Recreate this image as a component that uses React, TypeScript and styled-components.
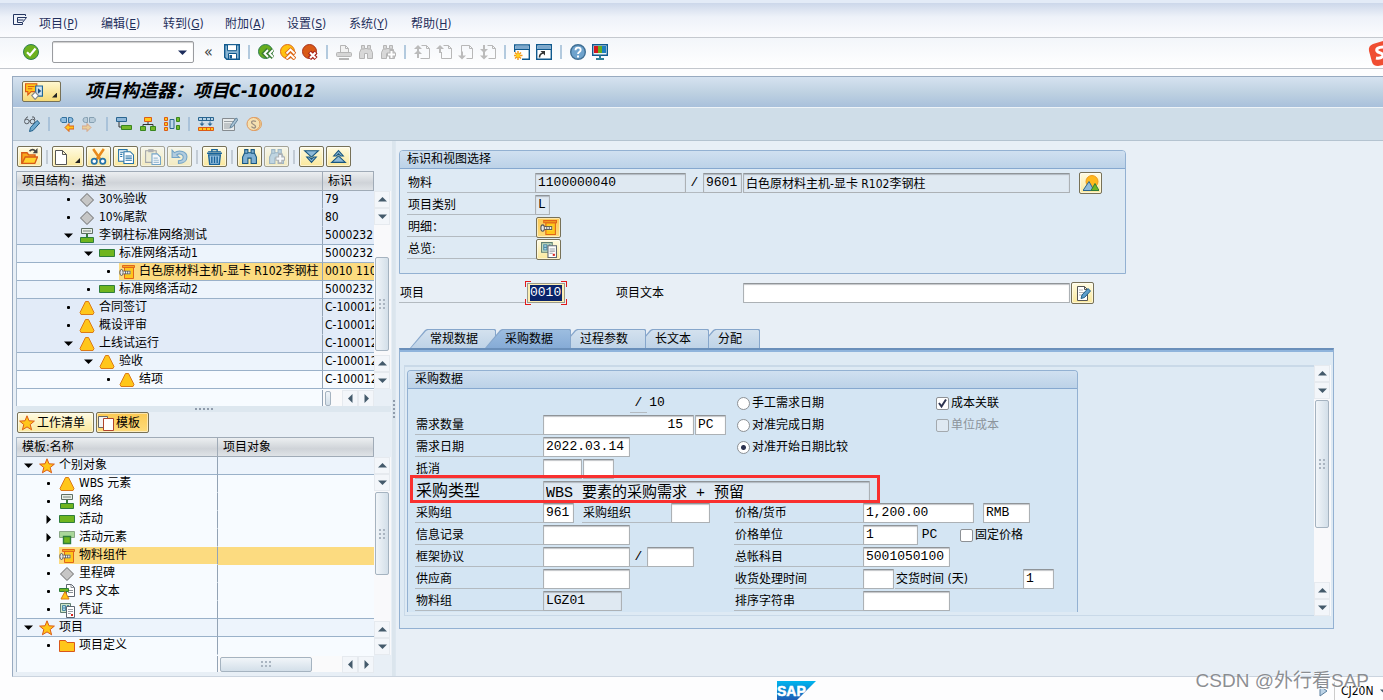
import React from "react";
import styled, { createGlobalStyle, css } from "styled-components";

const UI = `"DejaVu Sans Condensed", "Noto Sans", "Noto Sans CJK SC", sans-serif`;
const MONO = `"Liberation Mono", "Noto Sans CJK SC", monospace`;

const GlobalStyle = createGlobalStyle`
  *, *::before, *::after { box-sizing: border-box; }
  body {
    margin: 0;
    background: #fff;
    color: #000;
    font: 12px/18px ${UI};
  }
  button, input { font: inherit; color: inherit; margin: 0; }
`;

/* ---------- icons ---------- */

const binocular = (fill: string, stroke: string) => (
  <path
    d="M3.5 1.5h3v3h3v-3h3v3l2 4v6h-5v-5h-3v5h-5v-6l2-4z M3.5 5h3 M9.5 5h3"
    fill={fill}
    stroke={stroke}
  />
);

const ICONS: Record<string, React.ReactNode> = {
  menu: <path d="M13.5 3V1.5h-12v10h9V10 M5.5 4.5h9l-4 5h-5z M5.5 7h6" fill="none" stroke="#233560" />,
  ok: (
    <>
      <circle cx="8" cy="8" r="7.5" fill="#6db11e" stroke="#2f7f55" />
      <path d="M4 8.2l3 3 5.500-6.700" fill="none" stroke="#fff" strokeWidth="2.2" />
    </>
  ),
  save: (
    <>
      <path d="M.7.7h14.6v14.6H2.700l-2-2z" fill="#89b5d3" stroke="#10598e" strokeWidth="1.4" />
      <path d="M3.5.7h9v6h-9z" fill="#fff" stroke="#10598e" />
      <path d="M4.5 9.5h8V15h-8z" fill="#fff" stroke="#10598e" />
      <path d="M5.5 11H8v3.500H5.500z" fill="#10598e" />
    </>
  ),
  back: (
    <>
      <circle cx="7.500" cy="7.500" r="7" fill="#67ad1d" stroke="#2f7f55" />
      <path d="M10 5.500l-4 4 4 4 M15 5.500l-4 4 4 4" fill="none" stroke="#3b7d35" strokeWidth="4" />
      <path d="M10 6L6.500 9.500 10 13 M15 6l-3.500 3.500L15 13" fill="none" stroke="#fff" strokeWidth="1.8" />
    </>
  ),
  exit: (
    <>
      <circle cx="7.500" cy="7.500" r="7" fill="#ffc20e" stroke="#dd6a1b" />
      <path d="M6 10l4.500-4 4.500 4 M6 15l4.500-4 4.500 4" fill="none" stroke="#dd6a1b" strokeWidth="4" />
      <path d="M6.500 9.500l4-4 4 4 M6.500 14.500l4-4 4 4" fill="none" stroke="#fff" strokeWidth="1.8" />
    </>
  ),
  cancel: (
    <>
      <circle cx="7.500" cy="7.500" r="7" fill="#d95a16" stroke="#a8321c" />
      <path d="M7.500 8l6.500 6.500 M14 8l-6.500 6.500" stroke="#a8231a" strokeWidth="4.5" />
      <path d="M8 8.500l5.500 5.500 M13.500 8.500L8 14" stroke="#fff" strokeWidth="2" />
    </>
  ),
  print: (
    <>
      <path d="M4.500 8V1.500h5l3 3V8 M9.500 1.500v3h3" fill="#f2f2f2" stroke="#b5b5b5" />
      <rect x=".5" y="8.5" width="15" height="4" rx="1" fill="#d5d5d5" stroke="#b5b5b5" />
      <path d="M3 15h10" stroke="#b5b5b5" strokeWidth="2" />
    </>
  ),
  find: binocular("#d8d8d8", "#b5b5b5"),
  findNext: (
    <>
      {binocular("#d8d8d8", "#b5b5b5")}
      <path d="M11.500 5v10 M7 10.500h9" stroke="#b5b5b5" strokeWidth="4" />
      <path d="M11.500 7v7 M8 10.500h7" stroke="#fff" strokeWidth="2" />
    </>
  ),
  first: (
    <>
      <path d="M7.500 1.500h5l3 3v10h-9 M12.500 1.500v3h3" fill="none" stroke="#b8b8b8" />
      <path d="M4 1L0 5h3v3h2V5h3z M4 6L0 10h3v4h2v-4h3z" fill="#bbb" />
    </>
  ),
  prev: (
    <>
      <path d="M7.500 1.500h5l3 3v10h-10V8 M12.500 1.500v3h3" fill="none" stroke="#b8b8b8" />
      <path d="M4 1L0 5h3v4h2V5h3z" fill="#bbb" />
    </>
  ),
  next: (
    <>
      <path d="M3.500 9V1.500h8l3 3v10h-6 M11.500 1.500v3h3" fill="none" stroke="#b8b8b8" />
      <path d="M4 15.500l-4-4h3v-4h2v4h3z" fill="#bbb" />
    </>
  ),
  last: (
    <>
      <path d="M7.500 1.500h5l3 3v10h-7 M12.500 1.500v3h3" fill="none" stroke="#b8b8b8" />
      <path d="M4 9L0 5h3V1h2v4h3z M4 15.500l-4-4h3V8h2v3.500h3z" fill="#bbb" />
    </>
  ),
  newSession: (
    <>
      <path d="M.7 8V1h14.600v14.300H8" fill="#fff" stroke="#10598e" strokeWidth="1.4" />
      <path d="M1.500 1.500h13V5h-13z" fill="#7da8cc" />
      <path d="M0 5.500h16" stroke="#10598e" />
      <path d="M4 7v9 M0 11.500h8.500 M1 8.500l6 6 M7 8.500l-6 6" stroke="#f59a1b" strokeWidth="1.5" />
      <circle cx="4" cy="11.5" r="2" fill="#ffd21e" />
    </>
  ),
  shortcut: (
    <>
      <path d="M.7.7h14.600v14.600H.7z" fill="#fff" stroke="#10598e" strokeWidth="1.4" />
      <path d="M1.500 1.500h13V5h-13z" fill="#7da8cc" />
      <path d="M1 5.500h14" stroke="#10598e" />
      <path d="M3.500 13.500c0-3 1-4 3.500-4.500" fill="none" stroke="#333" strokeWidth="1.6" />
      <path d="M4.500 7h4.500v4.500z" fill="#333" />
    </>
  ),
  help: (
    <>
      <circle cx="8" cy="8" r="7.3" fill="#6fa3cd" stroke="#3f6f95" strokeWidth="1.4" />
      <path d="M5.500 6.200C5.500 2.800 10.700 3 10.700 6c0 2-2.700 2-2.700 4" fill="none" stroke="#fff" strokeWidth="1.8" />
      <path d="M7 11.500h2v2H7z" fill="#fff" />
    </>
  ),
  monitor: (
    <>
      <path d="M.7.7h14.600v10.600H.7z" fill="#e9f1f6" stroke="#10598e" strokeWidth="1.4" />
      <path d="M2 2h4v7H2z" fill="#d6171b" />
      <path d="M6 2h4v7H6z" fill="#67ad1d" />
      <path d="M10 2h4v7h-4z" fill="#1d7fbe" />
      <path d="M8 11.500v3 M4 15h8" stroke="#2f7f98" strokeWidth="2" />
    </>
  ),
  glasses: (
    <>
      <circle cx="2.800" cy="5.500" r="2.300" fill="none" stroke="#5b6066" />
      <circle cx="8.500" cy="5.500" r="2.300" fill="none" stroke="#5b6066" />
      <path d="M.8 4L3 1h1 M8 1h2l1 3 M5 5h1.500" fill="none" stroke="#5b6066" />
      <path d="M5.500 15.500l1-4L13 4.500 15.700 7 9 14.500z" fill="#6fa9cf" stroke="#215f88" />
    </>
  ),
  swapLeft: (
    <>
      <path d="M8.500 1.500H4a3 3 0 000 5h4.500z M10.500 1.500h2a2.500 2.500 0 010 5h-2z" fill="#8fbde0" stroke="#34719d" />
      <path d="M7 11.500l4-4V10h5v3h-5v2.500z" fill="#ffc61a" stroke="#dc5a16" />
    </>
  ),
  swapRight: (
    <g opacity=".6">
      <path d="M7.500 1.500H12a3 3 0 010 5H7.500z M5.500 1.500h-2a2.500 2.500 0 000 5h2z" fill="#a9c1d1" stroke="#56788f" />
      <path d="M9 11.500l-4-4V10H0v3h5v2.500z" fill="#fcc66a" stroke="#d8804a" />
    </g>
  ),
  gantt: (
    <>
      <path d="M3 6v5h3" fill="none" stroke="#333" />
      <path d="M.5 1.500h10v4H.5z" fill="#8db6d8" stroke="#2a6590" />
      <path d="M5.500 9.500h10v4h-10z" fill="#76b82a" stroke="#38861f" />
    </>
  ),
  hierarchy: (
    <>
      <path d="M8 6v3 M3 11V8.500h10V11" fill="none" stroke="#333" />
      <path d="M4.500 1.500h7v4h-7z" fill="#ffc61a" stroke="#dc5a16" />
      <path d="M.5 10.500h5v4h-5z M10.500 10.500h5v4h-5z" fill="#76b82a" stroke="#38861f" />
    </>
  ),
  network: (
    <>
      <path d="M.5 1.500h3v3h-3z M.5 6.500h3v3h-3z M.5 11.500h3v3h-3z" fill="#ffc61a" stroke="#dc5a16" />
      <path d="M6 3.500h4v9H6z" fill="#bcd7ea" stroke="#2a6590" />
      <path d="M12.500 1.500h3v4h-3z M12.500 9.500h3v4h-3z" fill="#76b82a" stroke="#38861f" />
    </>
  ),
  moveRow: (
    <>
      <path d="M.5 1.500h15v3H.5z M4.500 1.500v3 M8.500 1.500v3 M12.500 1.500v3" fill="#b5d2e6" stroke="#2a6590" />
      <path d="M4 5.500v3 M12 5.500v3" stroke="#2a6590" />
      <path d="M1.500 7.500h5L4 10z M9.500 7.500h5L12 10z" fill="#2a6590" />
      <path d="M.5 11.500h15v3H.5z M4.500 11.500v3 M8.500 11.500v3 M12.500 11.500v3" fill="#ffc61a" stroke="#dc5a16" />
    </>
  ),
  editForm: (
    <>
      <path d="M.5 2.500h12v12H.5z" fill="#e8ebec" stroke="#858b90" />
      <path d="M2 5.500h9 M2 8h7 M2 10h6 M2 12h6" stroke="#9aa0a4" />
      <path d="M8 12l1-3 5-7 2 1.500-5 7z" fill="#a7c1d4" stroke="#64859c" />
    </>
  ),
  coin: (
    <>
      <circle cx="9" cy="8" r="6.500" fill="#f3d79c" stroke="#dba36b" />
      <circle cx="7.500" cy="8" r="6.500" fill="#f5e0b0" stroke="#e0985c" />
      <path d="M10 5.500C6 4 5 6 6 7.300S10 9 9.500 11 6 11.500 5.500 10.500" fill="none" stroke="#9c8f80" strokeWidth="1.3" />
    </>
  ),
  services: (
    <>
      <path d="M.5 1.500h10v7h-5l-3 3v-3h-2z" fill="#ffc61a" stroke="#dc5a16" />
      <path d="M2.500 4h6 M2.500 6h4" stroke="#dc5a16" />
      <path d="M9.500 3.500h6v9h-6z" fill="#cfe3f2" stroke="#1f6698" />
      <path d="M11.500 5.500v5l3-2.500z" fill="#1f4f80" />
      <path d="M6 12l3-3 3 3-3 3.500z" fill="#fff" stroke="#888" />
    </>
  ),
  open: (
    <>
      <path d="M.7 14.500v-10h5l1.500 2h6v3" fill="#f8a91c" stroke="#d85a18" strokeWidth="1.3" />
      <path d="M1 14.500l3-6h11.500l-2.500 6z" fill="#ffd22e" stroke="#d85a18" strokeWidth="1.3" />
      <path d="M8 3c2-2 4-2 5.500 0" fill="none" stroke="#444" strokeWidth="1.5" />
      <path d="M15.500 0v5H11z" fill="#444" />
    </>
  ),
  create: <path d="M2.500 1.500h7l4 4v10h-11z M9.500 1.500v4h4" fill="#fff" stroke="#555" />,
  cut: (
    <>
      <path d="M3 1l7 10 M13 1L6 11" stroke="#e98a1c" strokeWidth="2.4" />
      <circle cx="4" cy="12.500" r="2.500" fill="#fff" stroke="#2673a8" strokeWidth="1.6" />
      <circle cx="12" cy="12.500" r="2.500" fill="#fff" stroke="#2673a8" strokeWidth="1.6" />
    </>
  ),
  copy: (
    <>
      <path d="M1.500 1.500h8v11h-8z" fill="#fff" stroke="#2673a8" />
      <path d="M6.500 3.500h6l3 3v8h-9z" fill="#fff" stroke="#2673a8" />
      <path d="M8 7.500h6 M8 9.500h6 M8 11.500h6 M3 4h3 M3 6h2 M3 8h2" stroke="#2673a8" />
    </>
  ),
  paste: (
    <>
      <path d="M1.500 2.500h10v11h-10z" fill="#f5edc0" stroke="#777" />
      <path d="M4 1h5v3H4z" fill="#888" />
      <path d="M7.500 5.500h5l3 3v7h-8z" fill="#fff" stroke="#2673a8" />
      <path d="M9 9.500h4 M9 11.500h5 M9 13.500h5" stroke="#6f9fbe" />
    </>
  ),
  undo: (
    <path d="M1 2v7h7L5.300 6.500C8 4.500 11.500 6 11.500 8.500S9.500 12 7 12v2.500c5 0 8-2.500 8-6C15 3.500 8 1 3.200 4.300z" fill="#8db6d0" stroke="#2673a8" />
  ),
  trash: (
    <>
      <path d="M2.500 6.500h11l-1 9h-9z" fill="#9cc4e0" stroke="#17629a" strokeWidth="1.3" />
      <path d="M1 5h14 M5.500 3.500v-2h5v2 M5.500 8v6 M8 8v6 M10.500 8v6" fill="none" stroke="#17629a" strokeWidth="1.3" />
      <path d="M2 3.500h12" stroke="#17629a" />
    </>
  ),
  search: binocular("#7fb0d4", "#17557f"),
  searchNext: (
    <>
      {binocular("#a5c4d4", "#6a8fa6")}
      <path d="M11.500 5v10 M7 10h9" stroke="#888" strokeWidth="4" />
      <path d="M11.500 6.500v7 M8 10h7" stroke="#fff" strokeWidth="2" />
    </>
  ),
  expand: (
    <>
      <path d="M1.500 2.500h13l-6.500 6z" fill="#8db9d8" stroke="#17557f" />
      <path d="M3.500 8.500H6l2 2 2-2h2.500l-4.500 5z" fill="#8db9d8" stroke="#17557f" />
    </>
  ),
  collapse: (
    <>
      <path d="M1.500 13.500h13l-6.500-6z" fill="#8db9d8" stroke="#17557f" />
      <path d="M3.500 7.500H6l2-2 2 2h2.500L8 2.500z" fill="#8db9d8" stroke="#17557f" />
    </>
  ),
  star: (
    <path d="M8 .8l2 5 5.400.3-4.200 3.400 1.400 5.300L8 11.900l-4.600 2.900 1.400-5.300L.6 6.100 6 5.800z" fill="#ffc61a" stroke="#dc5a16" />
  ),
  template: (
    <>
      <path d="M.5 1.500h9v11h-9z" fill="#f3f3f3" stroke="#666" />
      <path d="M5.500 3.500h10v12h-10z" fill="#fff" stroke="#b0432a" />
    </>
  ),
  milestone: <path d="M8 1.500l6.500 6.500L8 14.500 1.500 8z" fill="#c6c6c6" stroke="#6a6a6a" />,
  header: (
    <>
      <path d="M8 6v4" stroke="#3a7d3a" strokeWidth="2" />
      <path d="M2.500.5h11v5h-11z" fill="#e8efe6" stroke="#5f6f64" />
      <path d="M4 3h8" stroke="#7a857c" />
      <path d="M1.500 9.500h13v5h-13z" fill="#6fb51f" stroke="#2e7d3c" />
    </>
  ),
  activity: <path d="M.5 3.500h15v7H.5z" fill="#6fb51f" stroke="#2e7d3c" />,
  element: (
    <>
      <path d="M.5 1.500h15v6H.5z" fill="#a9d79a" stroke="#8aa887" />
      <path d="M4.500 6.500h7v7h-7z" fill="#6fb51f" stroke="#2e7d3c" strokeWidth="1.4" />
    </>
  ),
  bolt: (
    <>
      <path d="M5.500 3.500h9v11h-9z" fill="#ffc61a" stroke="#e0651a" />
      <path d="M3.500 1.500h12v2h-12z" fill="#f6a81c" stroke="#e0651a" />
      <path d="M7 6h5v5H7z" fill="#ffd83a" />
      <ellipse cx="2.500" cy="8.500" rx="1.700" ry="3" fill="#e8e8e8" stroke="#555" />
      <path d="M4.500 8.500h7" stroke="#555" strokeWidth="3.600" />
      <path d="M4.500 8.500h7" stroke="#f0f0f0" strokeWidth="2" strokeDasharray="1.5 .8" />
    </>
  ),
  docs: (
    <>
      <path d="M1.500 1.500h10v9h-10z" fill="#cfe6c8" stroke="#5f7f72" />
      <path d="M3.500 3.500h3v5h-3z M8 3.500h2 M3.500 6h3" fill="#a9d3e6" stroke="#4d8aa3" />
      <path d="M7.500 4.500h8v11h-8z" fill="#fff" stroke="#5d6570" />
      <path d="M9 7.500h5 M9 9.500h5 M9 11.500h3" stroke="#9aa0a8" />
      <path d="M12 12h2v2h-2z" fill="#d9221c" />
    </>
  ),
  wbs: <path d="M6.500 1.500h3l5.500 11-1 2H2l-1-2z" fill="#ffc61a" stroke="#dc7a16" />,
  psText: (
    <>
      <path d="M7.500.5h5l3 3v9h-8z" fill="#fff" stroke="#5d6570" />
      <path d="M12 .5v3h3 M9 6.500h5 M9 8.500h5" stroke="#8a9098" fill="none" />
      <path d="M.5 4.500h9v3h-9z" fill="#6fb51f" stroke="#2e7d3c" />
      <path d="M6 7.500l4 7.500H2z" fill="#ffc61a" stroke="#dc7a16" />
    </>
  ),
  folder: <path d="M.5 13.500v-11h6l1.500 2h7.500v9z" fill="#ffc61a" stroke="#d9571a" />,
  picture: (
    <>
      <circle cx="9" cy="6.500" r="6" fill="#ffb81c" stroke="#f09a1b" />
      <path d="M0 15.500l6-9 5 9z" fill="#8fbbdb" stroke="#2a6590" />
      <path d="M8 15.500l4-7 4 7z" fill="#6fb51f" stroke="#2e7d3c" />
    </>
  ),
  editText: (
    <>
      <path d="M2.500 1.500h7l3 3v11h-10z M9.500 1.500v3h3" fill="#fff" stroke="#555" />
      <path d="M4 5h4 M4 7.500h6 M4 10h4" stroke="#b5b5b5" />
      <path d="M6 13.500L7 10l6-6.500L15.500 6l-6 6.500z" fill="#5d9dca" stroke="#215f88" />
    </>
  ),
};

const Svg = styled.svg`
  display: block;
  flex: none;
`;
const Icon = ({ name, size = 16 }: { name: string; size?: number }) => (
  <Svg width={size} height={size} viewBox="0 0 16 16" aria-hidden>
    {ICONS[name]}
  </Svg>
);

/* ---------- shell ---------- */

const Shell = styled.div`
  position: relative;
  display: flex;
  flex-direction: column;
  min-height: 100vh;
  overflow: hidden;
  background: #fdfdfe;
`;
const MenuBar = styled.nav`
  display: flex;
  align-items: center;
  gap: 21px;
  height: 38px;
  padding: 8px 12px 0;
  border-top: 3px solid #e3ebf7;
  border-bottom: 1px solid #c5c9cf;
  background: linear-gradient(#ccd7ea, #eef2f9 14px, #fbfcfe);
  color: #1f2f5b;
`;
const MenuIcon = styled.span`
  margin: -6px -10px 0 0;
`;
const MenuItem = styled.button`
  padding: 0;
  border: 0;
  background: none;
  white-space: nowrap;
  min-width: 41px;
  text-align: left;
`;
const SystemBar = styled.div`
  display: flex;
  align-items: center;
  gap: 6px;
  height: 31px;
  padding: 0 0 2px 23px;
  border-bottom: 1px solid #c3c7cd;
  background: linear-gradient(#f3f6fa, #fff);
`;
const FlatButton = styled.button`
  display: flex;
  padding: 0;
  border: 0;
  background: none;
`;
const Divider = styled.span<{ $tone?: string; $tight?: boolean }>`
  flex: none;
  width: 2px;
  height: 14px;
  margin: 0 ${(p) => (p.$tight ? 0 : 2)}px;
  background: ${(p) => p.$tone ?? "#b3cade"};
`;
const CommandBox = styled.div`
  display: flex;
  align-items: center;
  width: 142px;
  height: 22px;
  margin: 0 4px 0 7px;
  padding-right: 6px;
  border: 1px solid #9a9ca0;
  border-radius: 2px;
  background: #fff;
  box-shadow: inset 0 1px 1px #ccc;
`;
const CommandInput = styled.input`
  flex: 1;
  min-width: 0;
  border: 0;
  outline: 0;
  background: none;
`;
const Chevrons = styled.span`
  width: 14px;
  font-size: 16px;
  line-height: 20px;
  color: #444;
`;
const CornerBadge = styled.div`
  position: absolute;
  top: 40px;
  right: 0;
`;
const Window = styled.div`
  flex: 1;
  display: flex;
  flex-direction: column;
  margin: 7px 0 0 12px;
  border: solid #98aac0;
  border-width: 1px 0 1px 1px;
  border-bottom-color: #cbd4df;
  background: #e8eff6;
`;
const TitleBar = styled.header`
  display: flex;
  align-items: center;
  gap: 24px;
  height: 31px;
  padding: 0 0 2px 9px;
  border-bottom: 1px solid #eef3f7;
  background: linear-gradient(#d6e2f0, #bfd2e2 50%, #a9c0db);
`;
const Title = styled.h1`
  margin: 0;
  font: italic bold 18px/24px ${UI};
  white-space: nowrap;
`;
const ServicesButton = styled.button`
  display: flex;
  align-items: center;
  width: 39px;
  height: 21px;
  padding: 0 0 0 2px;
  border: 1px solid #777157;
  border-radius: 2px;
  background: linear-gradient(#fff7cf, #f5da77);
`;
const Corner = styled.span`
  align-self: flex-end;
  width: 5px;
  height: 5px;
  margin: 0 3px 3px auto;
  background: #222;
  clip-path: polygon(100% 0, 100% 100%, 0 100%);
`;
const AppBar = styled.div`
  display: flex;
  align-items: center;
  gap: 8px;
  height: 33px;
  padding-left: 11px;
  border-bottom: 1px solid #b4c3d0;
  background: #cfdde8;
`;
const Body = styled.div`
  flex: 1;
  display: flex;
`;

/* ---------- left side ---------- */

const Side = styled.aside`
  flex: none;
  display: flex;
  flex-direction: column;
  width: 379px;
  padding: 5px 1px 4px 3px;
`;
const SideTools = styled.div`
  display: flex;
  align-items: center;
  gap: 2px;
  height: 21px;
  margin-bottom: 4px;
  padding-left: 1px;
`;
const Tool = styled.button<{ $wide?: boolean; $dim?: boolean; $on?: boolean }>`
  flex: none;
  display: flex;
  align-items: center;
  justify-content: center;
  width: ${(p) => (p.$wide ? 32 : 25)}px;
  height: 21px;
  padding: 0 ${(p) => (p.$wide ? 0 : 3)}px;
  border: 1px solid #777157;
  border-radius: 2px;
  background: ${(p) => (p.$on ? "linear-gradient(#fbc953, #fddc7c)" : "linear-gradient(#fffbe2, #fae89c)")};
  box-shadow: inset 0 0 0 1px rgba(255, 255, 255, 0.5);
  opacity: ${(p) => (p.$dim ? 0.6 : 1)};
`;
const SquareTool = styled(Tool)`
  width: 23px;
  height: 22px;
`;
const ToolText = styled(Tool)`
  width: auto;
  gap: 2px;
  padding: 0 8px 0 1px;
`;
const TreeBox = styled.section`
  display: flex;
  border-left: 1px solid #a9bacb;
`;
const TreeMain = styled.div`
  flex: 1;
  min-width: 0;
  background: #f7fbff;
`;
const TreeTable = styled.table`
  width: 100%;
  table-layout: fixed;
  border-collapse: separate;
  border-spacing: 0;
`;
const HeadCell = styled.th<{ $width?: number }>`
  height: 20px;
  padding: 0 5px;
  width: ${(p) => (p.$width ? `${p.$width}px` : "auto")};
  border: solid #a0abb7;
  border-width: 1px 1px 1px 0;
  background: linear-gradient(#eceff1, #cfd3d8 60%, #dfe3e7);
  font-weight: normal;
  line-height: 17px;
  text-align: left;
  white-space: nowrap;
`;
const Row = styled.tr<{ $tone: string; $line?: boolean }>`
  background: ${(p) => p.$tone};
  td {
    height: 18px;
    padding: 0;
    border-bottom: 1px solid ${(p) => (p.$line ? "#9ab1c9" : "transparent")};
    line-height: 17px;
    white-space: nowrap;
    overflow: hidden;
  }
  td:first-child {
    border-right: 1px solid #93a3b5;
  }
`;
const Node = styled.div<{ $level: number }>`
  display: flex;
  height: 17px;
  padding-left: ${(p) => p.$level * 20}px;
`;
const Mark = styled.span`
  flex: none;
  display: flex;
  align-items: center;
  justify-content: center;
  width: 22px;
`;
const NodeLabel = styled.span<{ $hot?: boolean }>`
  flex: 1;
  display: flex;
  align-items: center;
  gap: 4px;
  background: ${(p) => (p.$hot ? "#fcdb80" : "none")};
`;
const IdCell = styled.td<{ $hot?: boolean }>`
  && {
    padding-left: 2px;
    background: ${(p) => (p.$hot ? "#fcdb80" : "none")};
  }
`;
const TreeFoot = styled.div<{ $split: number }>`
  display: flex;
  height: 17px;
  padding-left: ${(p) => p.$split}px;
  border-top: 1px solid #f7fbff;
`;
const HScroll = styled.div`
  flex: 1;
  display: flex;
  align-items: center;
  padding-left: 2px;
  border-left: 1px solid #93a3b5;
  background: #fafafb;
`;
const HThumb = styled.div<{ $length: number }>`
  display: flex;
  align-items: center;
  justify-content: center;
  width: ${(p) => p.$length}px;
  height: 15px;
  margin-right: auto;
  border: 1px solid #a5b3c0;
  border-radius: 2px;
  background: linear-gradient(#f1f5f9, #d3dfe9);
`;
const VScroll = styled.div<{ $top?: number; $bottom?: number }>`
  flex: none;
  display: flex;
  flex-direction: column;
  width: 17px;
  padding: ${(p) => p.$top ?? 0}px 0 ${(p) => p.$bottom ?? 0}px;
  background: #f9f9fb content-box;
`;
const Arrow = styled.button`
  flex: none;
  display: flex;
  align-items: center;
  justify-content: center;
  width: 16px;
  height: 17px;
  padding: 0;
  border: 1px solid #e6eaef;
  background: #f3f6fa;
`;
const VThumb = styled.div<{ $offset: number; $length: number }>`
  display: flex;
  align-items: center;
  justify-content: center;
  width: 14px;
  height: ${(p) => p.$length}px;
  margin: ${(p) => p.$offset}px 1px auto;
  border: 1px solid #a5b3c0;
  border-radius: 2px;
  background: linear-gradient(90deg, #f1f5f9, #d3dfe9);
`;
const Grip = styled.span<{ $w: number; $h: number; $dark?: boolean }>`
  width: ${(p) => p.$w}px;
  height: ${(p) => p.$h}px;
  background: repeating-linear-gradient(90deg, ${(p) => (p.$dark ? "#8f9bab" : "#aab5c1")} 0 2px, transparent 2px 4px);
  mask: repeating-linear-gradient(#000 0 2px, transparent 2px 4px);
`;
const Splitter = styled.div<{ $vertical?: boolean }>`
  flex: none;
  display: flex;
  align-items: center;
  justify-content: center;
  ${(p) =>
    p.$vertical
      ? css`
          width: 4px;
          border-right: 1px solid #dde7f0;
          background: #dbe5ed;
        `
      : css`
          height: 6px;
          background: #dde7ef;
        `}
`;
const SideTabs = styled.div`
  display: flex;
  gap: 2px;
  height: 25px;
  padding-left: 1px;
`;

const Tri = ({ dir, color = "#445a6b" }: { dir: "up" | "down" | "left" | "right"; color?: string }) => {
  const d = {
    up: "M0 6.500L4.500 2 9 6.500z",
    down: "M0 2.500L4.500 7 9 2.500z",
    left: "M6.500 0L2 4.500 6.500 9z",
    right: "M2.500 0L7 4.500 2.500 9z",
  }[dir];
  return (
    <Svg width="9" height="9" viewBox="0 0 9 9" aria-hidden>
      <path d={d} fill={color} />
    </Svg>
  );
};

type ScrollProps = { offset: number; length: number; top?: number; bottom?: number };
const VerticalScroll = ({ offset, length, top, bottom }: ScrollProps) => (
  <VScroll $top={top} $bottom={bottom}>
    <Arrow aria-label="向上"><Tri dir="up" /></Arrow>
    <Arrow aria-label="向下"><Tri dir="down" /></Arrow>
    <VThumb $offset={offset} $length={length}><Grip $w={6} $h={10} /></VThumb>
    <Arrow aria-label="向上"><Tri dir="up" /></Arrow>
    <Arrow aria-label="向下"><Tri dir="down" /></Arrow>
  </VScroll>
);

type TreeRow = {
  level: number;
  mark: "dot" | "open" | "closed";
  icon: string;
  label: string;
  id?: string;
  tone: string;
  line?: boolean;
  hot?: boolean;
};
const T1 = "#e2ebf8";
const T2 = "#edf4fc";
const T3 = "#f7fbff";

const structure: TreeRow[] = [
  { level: 2, mark: "dot", icon: "milestone", label: "30%验收", id: "79", tone: T1 },
  { level: 2, mark: "dot", icon: "milestone", label: "10%尾款", id: "80", tone: T1 },
  { level: 2, mark: "open", icon: "header", label: "李钢柱标准网络测试", id: "5000232", tone: T1, line: true },
  { level: 3, mark: "open", icon: "activity", label: "标准网络活动1", id: "5000232", tone: T2, line: true },
  { level: 4, mark: "dot", icon: "bolt", label: "白色原材料主机-显卡 R102李钢柱", id: "0010 110", tone: T3, line: true, hot: true },
  { level: 3, mark: "dot", icon: "activity", label: "标准网络活动2", id: "5000232", tone: T2, line: true },
  { level: 2, mark: "dot", icon: "wbs", label: "合同签订", id: "C-100012", tone: T1 },
  { level: 2, mark: "dot", icon: "wbs", label: "概设评审", id: "C-100012", tone: T1 },
  { level: 2, mark: "open", icon: "wbs", label: "上线试运行", id: "C-100012", tone: T1, line: true },
  { level: 3, mark: "open", icon: "wbs", label: "验收", id: "C-100012", tone: T2, line: true },
  { level: 4, mark: "dot", icon: "wbs", label: "结项", id: "C-100012", tone: T3, line: true },
];
const templates: TreeRow[] = [
  { level: 0, mark: "open", icon: "star", label: "个别对象", tone: T2, line: true },
  { level: 1, mark: "dot", icon: "wbs", label: "WBS 元素", tone: T3 },
  { level: 1, mark: "dot", icon: "header", label: "网络", tone: T3 },
  { level: 1, mark: "closed", icon: "activity", label: "活动", tone: T3 },
  { level: 1, mark: "closed", icon: "element", label: "活动元素", tone: T3 },
  { level: 1, mark: "dot", icon: "bolt", label: "物料组件", tone: T3, hot: true },
  { level: 1, mark: "dot", icon: "milestone", label: "里程碑", tone: T3 },
  { level: 1, mark: "dot", icon: "psText", label: "PS 文本", tone: T3 },
  { level: 1, mark: "dot", icon: "docs", label: "凭证", tone: T3, line: true },
  { level: 0, mark: "open", icon: "star", label: "项目", tone: T2, line: true },
  { level: 1, mark: "dot", icon: "folder", label: "项目定义", tone: T3 },
];

const Dot = styled.span`
  width: 3px;
  height: 3px;
  border-radius: 1px;
  background: #000;
`;

type TreeProps = {
  heads: [string, string];
  split: number;
  rows: TreeRow[];
  hThumb: number;
  offset: number;
  length: number;
};
const Tree = ({ heads, split, rows, hThumb, offset, length }: TreeProps) => (
  <TreeBox>
    <TreeMain>
      <TreeTable>
        <thead>
          <tr>
            <HeadCell $width={split + 1}>{heads[0]}</HeadCell>
            <HeadCell>{heads[1]}</HeadCell>
          </tr>
        </thead>
        <tbody>
          {rows.map((r, i) => (
            <Row key={i} $tone={r.tone} $line={r.line}>
              <td>
                <Node $level={r.level}>
                  <Mark>
                    {r.mark === "dot" ? <Dot /> : <Tri dir={r.mark === "open" ? "down" : "right"} color="#000" />}
                  </Mark>
                  <NodeLabel $hot={r.hot}>
                    <Icon name={r.icon} />
                    {r.label}
                  </NodeLabel>
                </Node>
              </td>
              <IdCell $hot={r.hot}>{r.id}</IdCell>
            </Row>
          ))}
        </tbody>
      </TreeTable>
      <TreeFoot $split={split}>
        <HScroll>
          <HThumb $length={hThumb}>{hThumb > 20 && <Grip $w={10} $h={6} />}</HThumb>
          <Arrow aria-label="向左"><Tri dir="left" /></Arrow>
          <Arrow aria-label="向右"><Tri dir="right" /></Arrow>
        </HScroll>
      </TreeFoot>
    </TreeMain>
    <VerticalScroll top={20} bottom={17} offset={offset} length={length} />
  </TreeBox>
);

/* ---------- right side ---------- */

const Main = styled.main`
  flex: 1;
  min-width: 0;
  padding: 9px 48px 32px 3px;
`;
const Group = styled.fieldset<{ $width: number; $deep?: boolean }>`
  width: 100%;
  max-width: ${(p) => p.$width}px;
  min-width: 0;
  margin: 0;
  padding: 0;
  border: 1px solid #93b1d2;
  border-bottom-width: ${(p) => (p.$deep ? 0 : 1)}px;
  border-radius: 4px 4px 0 0;
  background: ${(p) => (p.$deep ? "#d4e5f3" : "#deeaf4")};
`;
const GroupTitle = styled.h2`
  height: 18px;
  margin: 0;
  padding-left: 7px;
  border-bottom: 1px solid #86a8cf;
  border-radius: 3px 3px 0 0;
  background: linear-gradient(#d0e0f0, #bcd2e8);
  font: 12px/17px ${UI};
`;
const GroupBody = styled.div<{ $left: number; $bottom?: number }>`
  padding: 3px 0 ${(p) => p.$bottom ?? 0}px ${(p) => p.$left}px;
`;
const Line = styled.div`
  display: flex;
  align-items: center;
  height: 22px;
`;
const Half = styled.div`
  flex: none;
  display: flex;
  align-items: center;
  width: 319px;
`;
const Label = styled.label<{ $width: number; $bare?: boolean; $big?: boolean }>`
  flex: none;
  width: ${(p) => p.$width}px;
  height: 20px;
  padding: 1px 0 0 1px;
  border-bottom: 1px solid ${(p) => (p.$bare ? "transparent" : "#b3bac0")};
  font-size: ${(p) => (p.$big ? 16 : 12)}px;
  white-space: nowrap;
`;
const Field = styled.input<{ $width: number; $tone?: string; $right?: boolean; $gap?: number; $big?: boolean; $ui?: boolean }>`
  flex: none;
  width: ${(p) => p.$width}px;
  height: 20px;
  margin-left: ${(p) => p.$gap ?? 0}px;
  padding: 0 ${(p) => (p.$right ? 10 : 2)}px 1px 2px;
  border: 1px solid #acb1b5;
  border-top-color: #8f9498;
  border-radius: 1px;
  outline: 0;
  background: ${(p) => p.$tone ?? "#fff"};
  box-shadow: inset 0 1px 1px rgba(120, 125, 130, 0.45);
  font-family: ${(p) => (p.$ui ? UI : MONO)};
  font-size: ${(p) => (p.$ui ? 12 : p.$big ? 15 : 13)}px;
  text-align: ${(p) => (p.$right ? "right" : "left")};
`;
const Mono = styled.span<{ $width: number; $line?: boolean; $gap?: number }>`
  flex: none;
  width: ${(p) => p.$width}px;
  height: 20px;
  margin-left: ${(p) => p.$gap ?? 0}px;
  border-bottom: 1px solid ${(p) => (p.$line ? "#b3bac0" : "transparent")};
  font: 13px/19px ${MONO};
  text-align: center;
`;
const Gap = styled.span<{ $width: number }>`
  flex: 0 1 ${(p) => p.$width}px;
`;
const FocusFrame = styled.span`
  flex: none;
  padding: 2px;
  background:
    linear-gradient(#e01b1b, #e01b1b) 0 0 / 6px 1px,
    linear-gradient(#e01b1b, #e01b1b) 0 0 / 1px 6px,
    linear-gradient(#e01b1b, #e01b1b) 100% 0 / 6px 1px,
    linear-gradient(#e01b1b, #e01b1b) 100% 0 / 1px 6px,
    linear-gradient(#e01b1b, #e01b1b) 0 100% / 6px 1px,
    linear-gradient(#e01b1b, #e01b1b) 0 100% / 1px 6px,
    linear-gradient(#e01b1b, #e01b1b) 100% 100% / 6px 1px,
    linear-gradient(#e01b1b, #e01b1b) 100% 100% / 1px 6px;
  background-repeat: no-repeat;
`;
const KeyBox = styled.span`
  display: flex;
  width: 38px;
  height: 20px;
  padding: 1px 2px;
  border: 1px solid #9a9a8c;
  background: #fbeeb4;
`;
const KeyInput = styled.input`
  width: 32px;
  height: 16px;
  padding: 0;
  border: 0;
  outline: 0;
  background: #0a246a;
  color: #fff;
  font: 13px/16px ${MONO};
`;
const ItemLine = styled(Line)`
  height: 24px;
  margin: 7px 0 24px;
`;
const Tabs = styled.div`
  display: flex;
  height: 19px;
  padding-left: 11px;
`;
const slant = "polygon(0 100%, 15px 1px, 17px 0, calc(100% - 1px) 0, 100% 1px, 100% 100%)";
const Tab = styled.button<{ $on?: boolean; $z: number }>`
  position: relative;
  z-index: ${(p) => (p.$on ? 9 : p.$z)};
  isolation: isolate;
  padding: 2px 18px 0 20px;
  border: 0;
  background: #86a6cb;
  clip-path: ${slant};
  line-height: 17px;
  white-space: nowrap;
  & + & {
    margin-left: -11px;
  }
  &::before {
    content: "";
    position: absolute;
    z-index: -1;
    inset: 1px 1px 0 1px;
    background: ${(p) => (p.$on ? "linear-gradient(#9cbde0, #86abd6)" : "linear-gradient(#d3e1ee, #bfd3e7)")};
    clip-path: ${slant};
  }
`;
const TabPanel = styled.section`
  display: flex;
  width: 100%;
  max-width: 935px;
  padding: 15px 2px 12px 4px;
  border: 1px solid #93b1d2;
  border-top: 2px solid #6a8fba;
  box-shadow: inset 0 2px 0 #8fb4dc;
  background: #deeaf4;
`;
const Pane = styled.div`
  position: relative;
  flex: 1;
  min-width: 0;
  padding: 3px 0 3px 2px;
  border: solid #c9d9e8;
  border-width: 2px 0 1px 1px;
`;
const Choice = styled.label<{ $width?: number; $dim?: boolean; $gap?: number }>`
  flex: none;
  display: flex;
  align-items: center;
  gap: 2px;
  width: ${(p) => (p.$width ? `${p.$width}px` : "auto")};
  margin-left: ${(p) => p.$gap ?? 0}px;
  color: ${(p) => (p.$dim ? "#8c949b" : "#000")};
  white-space: nowrap;
`;
const Radio = styled.input`
  appearance: none;
  width: 13px;
  height: 13px;
  border: 1px solid #8d9195;
  border-radius: 50%;
  background: #fff;
  &:checked {
    background: radial-gradient(circle, #2c3350 0 2px, #fff 3px);
  }
`;
const Check = styled.input`
  appearance: none;
  width: 13px;
  height: 13px;
  border: 1px solid #8d9195;
  border-radius: 2px;
  background: #fff;
  &:disabled {
    background: #dfe9f2;
    border-color: #a3a9ae;
  }
  &:checked {
    background: #fff
      url("data:image/svg+xml,%3Csvg xmlns='http://www.w3.org/2000/svg' viewBox='0 0 11 11'%3E%3Cpath d='M2 5l2.500 3.500L9 1.500' fill='none' stroke='%232c3350' stroke-width='2'/%3E%3C/svg%3E");
  }
`;
const Highlight = styled.div`
  position: absolute;
  top: 108px;
  left: 5px;
  width: 470px;
  height: 28px;
  border: 3px solid #f9302f;
  pointer-events: none;
`;

/* ---------- footer ---------- */

const Footer = styled.footer`
  position: relative;
  display: flex;
  justify-content: center;
  height: 23px;
  padding: 4px 0 0 210px;
  background: #fdfdfe;
`;
const Status = styled.div`
  position: absolute;
  right: 0;
  bottom: 0;
  display: flex;
  align-items: center;
  gap: 6px;
  width: 64px;
  height: 18px;
  white-space: nowrap;
  overflow: hidden;
`;
const StatusText = styled.span`
  padding-left: 6px;
  border-left: 1px solid #ccc;
`;
const Watermark = styled.div`
  position: absolute;
  right: 14px;
  bottom: 6px;
  color: rgba(120, 122, 126, 0.85);
  font: 19px/26px "Liberation Sans", "Noto Sans CJK SC", sans-serif;
  text-shadow: 1px 1px 0 rgba(255, 255, 255, 0.8);
  pointer-events: none;
`;

const GREY = "#dfe9f2";
const menus: [string, string][] = [
  ["项目", "P"], ["编辑", "E"], ["转到", "G"], ["附加", "A"], ["设置", "S"], ["系统", "Y"], ["帮助", "H"],
];
const systemIcons = [
  "save", "|", "back", "exit", "cancel", "|", "print", "find", "findNext", "|",
  "first", "prev", "next", "last", "|", "newSession", "shortcut", "|", "help", "monitor",
];
const appIcons = [
  "glasses", "|", "swapLeft", "swapRight", "|", "gantt", "hierarchy", "network", "|", "moveRow", "editForm", "coin",
];
const sideIcons = [
  "open", "|", "create", "cut", "copy", "paste", "undo", "|", "trash", "|", "search", "searchNext", "|", "expand", "collapse",
];
const dimmed = ["paste", "undo", "searchNext"];

export default function App() {
  return (
    <>
      <GlobalStyle />
      <Shell>
        <MenuBar>
          <MenuIcon><Icon name="menu" /></MenuIcon>
          {menus.map(([name, key]) => (
            <MenuItem key={key}>{name}(<u>{key}</u>)</MenuItem>
          ))}
        </MenuBar>
        <SystemBar>
          <FlatButton aria-label="ok"><Icon name="ok" /></FlatButton>
          <CommandBox>
            <CommandInput aria-label="命令" />
            <Tri dir="down" color="#1d2d5c" />
          </CommandBox>
          <Chevrons>«</Chevrons>
          {systemIcons.map((n, i) =>
            n === "|" ? <Divider key={i} /> : <FlatButton key={i} aria-label={n}><Icon name={n} /></FlatButton>
          )}
        </SystemBar>
        <CornerBadge>
          <Svg width="15" height="27" viewBox="0 0 15 27" aria-hidden>
            <path d="M15 1L5 4Q0 6 1 11l3 11q1 4 6 4l5-1z" fill="#f04e32" />
            <path d="M15 7c-5 0-7 2-6 4s6 2 6 4-3 4-7 3" fill="none" stroke="#fff" strokeWidth="3" />
          </Svg>
        </CornerBadge>

        <Window>
          <TitleBar>
            <ServicesButton aria-label="服务"><Icon name="services" size={18} /><Corner /></ServicesButton>
            <Title>项目构造器：项目C-100012</Title>
          </TitleBar>
          <AppBar>
            {appIcons.map((n, i) =>
              n === "|" ? (
                <Divider key={i} $tone="#a9c2d9" $tight />
              ) : (
                <FlatButton key={i} aria-label={n}><Icon name={n} /></FlatButton>
              )
            )}
          </AppBar>

          <Body>
            <Side>
              <SideTools>
                {sideIcons.map((n, i) =>
                  n === "|" ? (
                    <Divider key={i} $tone="#c3ccd6" />
                  ) : (
                    <Tool key={i} aria-label={n} $wide={n === "create"} $dim={dimmed.includes(n)}>
                      <Icon name={n} size={n === "create" ? 16 : 17} />
                      {n === "create" && <Corner />}
                    </Tool>
                  )
                )}
              </SideTools>
              <Tree heads={["项目结构：描述", "标识"]} split={305} rows={structure} hThumb={6} offset={32} length={94} />
              <Splitter><Grip $w={18} $h={2} $dark /></Splitter>
              <SideTabs>
                <ToolText><Icon name="star" />工作清单</ToolText>
                <ToolText $on><Icon name="template" />模板</ToolText>
              </SideTabs>
              <Tree heads={["模板:名称", "项目对象"]} split={200} rows={templates} hThumb={92} offset={1} length={83} />
            </Side>
            <Splitter $vertical><Grip $w={2} $h={18} $dark /></Splitter>

            <Main>
              <Group $width={727}>
                <GroupTitle>标识和视图选择</GroupTitle>
                <GroupBody $left={7} $bottom={13}>
                  <Line>
                    <Label htmlFor="material" $width={128}>物料</Label>
                    <Field id="material" $width={151} $tone={GREY} defaultValue="1100000040" readOnly />
                    <Mono $width={17} $line>/</Mono>
                    <Field aria-label="工厂" $width={39} $tone={GREY} defaultValue="9601" readOnly />
                    <Field aria-label="描述" $gap={1} $width={327} $tone={GREY} $ui defaultValue="白色原材料主机-显卡 R102李钢柱" readOnly />
                    <Gap $width={9} />
                    <SquareTool aria-label="图片"><Icon name="picture" /></SquareTool>
                  </Line>
                  <Line>
                    <Label htmlFor="category" $width={128}>项目类别</Label>
                    <Field id="category" $width={15} $tone={GREY} defaultValue="L" readOnly />
                  </Line>
                  <Line>
                    <Label as="span" $width={129}>明细：</Label>
                    <Tool $on aria-label="明细"><Icon name="bolt" size={17} /></Tool>
                  </Line>
                  <Line>
                    <Label as="span" $width={129}>总览:</Label>
                    <Tool aria-label="总览"><Icon name="docs" size={17} /></Tool>
                  </Line>
                </GroupBody>
              </Group>

              <ItemLine>
                <Label htmlFor="item" $width={126}>项目</Label>
                <FocusFrame>
                  <KeyBox><KeyInput id="item" defaultValue="0010" /></KeyBox>
                </FocusFrame>
                <Gap $width={48} />
                <Label htmlFor="itemText" $width={128} $bare>项目文本</Label>
                <Field id="itemText" $width={327} />
                <Gap $width={1} />
                <SquareTool aria-label="编辑文本"><Icon name="editText" /></SquareTool>
              </ItemLine>

              <Tabs role="tablist">
                <Tab role="tab" $z={5}>常规数据</Tab>
                <Tab role="tab" $z={4} $on aria-selected>采购数据</Tab>
                <Tab role="tab" $z={3}>过程参数</Tab>
                <Tab role="tab" $z={2}>长文本</Tab>
                <Tab role="tab" $z={1}>分配</Tab>
              </Tabs>
              <TabPanel>
                <Pane>
                  <Group $width={671} $deep>
                    <GroupTitle>采购数据</GroupTitle>
                    <GroupBody $left={7}>
                      <Line>
                        <Half>
                          <Gap $width={215} />
                          <Mono $width={17} $line>/</Mono>
                          <Mono $width={20}>10</Mono>
                        </Half>
                        <Choice $width={199} $gap={3}><Radio type="radio" name="date" />手工需求日期</Choice>
                        <Choice><Check type="checkbox" defaultChecked />成本关联</Choice>
                      </Line>
                      <Line>
                        <Half>
                          <Label htmlFor="qty" $width={128}>需求数量</Label>
                          <Field id="qty" $width={151} $right defaultValue="15" />
                          <Field aria-label="单位" $gap={1} $width={31} defaultValue="PC" />
                        </Half>
                        <Choice $width={199} $gap={3}><Radio type="radio" name="date" />对准完成日期</Choice>
                        <Choice $dim><Check type="checkbox" disabled />单位成本</Choice>
                      </Line>
                      <Line>
                        <Half>
                          <Label htmlFor="reqDate" $width={128}>需求日期</Label>
                          <Field id="reqDate" $width={87} defaultValue="2022.03.14" />
                        </Half>
                        <Choice $gap={3}><Radio type="radio" name="date" defaultChecked />对准开始日期比较</Choice>
                      </Line>
                      <Line>
                        <Label htmlFor="offset" $width={128}>抵消</Label>
                        <Field id="offset" $width={39} />
                        <Field aria-label="抵消单位" $gap={1} $width={31} />
                      </Line>
                      <Line>
                        <Label htmlFor="procType" $width={128} $big>采购类型</Label>
                        <Field id="procType" $width={327} $tone={GREY} $big defaultValue="WBS 要素的采购需求 + 预留" readOnly />
                      </Line>
                      <Line>
                        <Half>
                          <Label htmlFor="purGroup" $width={128}>采购组</Label>
                          <Field id="purGroup" $width={31} defaultValue="961" />
                          <Gap $width={8} />
                          <Label htmlFor="purOrg" $width={89}>采购组织</Label>
                          <Field id="purOrg" $width={39} />
                        </Half>
                        <Label htmlFor="price" $width={129}>价格/货币</Label>
                        <Field id="price" $width={111} defaultValue="1,200.00" />
                        <Field aria-label="货币" $gap={9} $width={47} defaultValue="RMB" />
                      </Line>
                      <Line>
                        <Half>
                          <Label htmlFor="info" $width={128}>信息记录</Label>
                          <Field id="info" $width={87} />
                        </Half>
                        <Label htmlFor="priceUnit" $width={129}>价格单位</Label>
                        <Field id="priceUnit" $width={55} defaultValue="1" />
                        <Mono $width={23}>PC</Mono>
                        <Choice $gap={19}><Check type="checkbox" />固定价格</Choice>
                      </Line>
                      <Line>
                        <Half>
                          <Label htmlFor="agreement" $width={128}>框架协议</Label>
                          <Field id="agreement" $width={87} />
                          <Mono $width={17} $line>/</Mono>
                          <Field aria-label="协议项目" $width={47} />
                        </Half>
                        <Label htmlFor="account" $width={129}>总帐科目</Label>
                        <Field id="account" $width={87} defaultValue="5001050100" />
                      </Line>
                      <Line>
                        <Half>
                          <Label htmlFor="vendor" $width={128}>供应商</Label>
                          <Field id="vendor" $width={87} />
                        </Half>
                        <Label htmlFor="grTime" $width={129}>收货处理时间</Label>
                        <Field id="grTime" $width={31} />
                        <Gap $width={1} />
                        <Label htmlFor="delivery" $width={128}>交货时间 (天)</Label>
                        <Field id="delivery" $width={31} defaultValue="1" />
                      </Line>
                      <Line>
                        <Half>
                          <Label htmlFor="matGroup" $width={128}>物料组</Label>
                          <Field id="matGroup" $width={79} $tone={GREY} defaultValue="LGZ01" readOnly />
                        </Half>
                        <Label htmlFor="sort" $width={129}>排序字符串</Label>
                        <Field id="sort" $width={87} />
                      </Line>
                    </GroupBody>
                  </Group>
                  <Highlight />
                </Pane>
                <VerticalScroll offset={1} length={128} />
              </TabPanel>
            </Main>
          </Body>
        </Window>

        <Footer>
          <Svg width="39" height="19" viewBox="0 0 39 19" role="img" aria-label="SAP">
            <defs>
              <linearGradient id="sapBlue" x1="0" y1="0" x2="0" y2="1">
                <stop offset="0" stopColor="#00b5ee" />
                <stop offset="1" stopColor="#1d5cb5" />
              </linearGradient>
            </defs>
            <path d="M0 0h39L20 19H0z" fill="url(#sapBlue)" />
            <text x="0" y="15" fill="#fff" stroke="#fff" strokeWidth=".5" fontFamily="Liberation Sans, sans-serif" fontWeight="bold" fontSize="14">SAP</text>
          </Svg>
          <Status>
            <Svg width="9" height="12" viewBox="0 0 9 12" aria-hidden>
              <path d="M1 1l7 5-7 5z" fill="#bcd3e6" stroke="#5c7f9e" />
            </Svg>
            <StatusText>CJ20N</StatusText>
            <Tri dir="down" />
          </Status>
        </Footer>
        <Watermark>CSDN @外行看SAP</Watermark>
      </Shell>
    </>
  );
}
